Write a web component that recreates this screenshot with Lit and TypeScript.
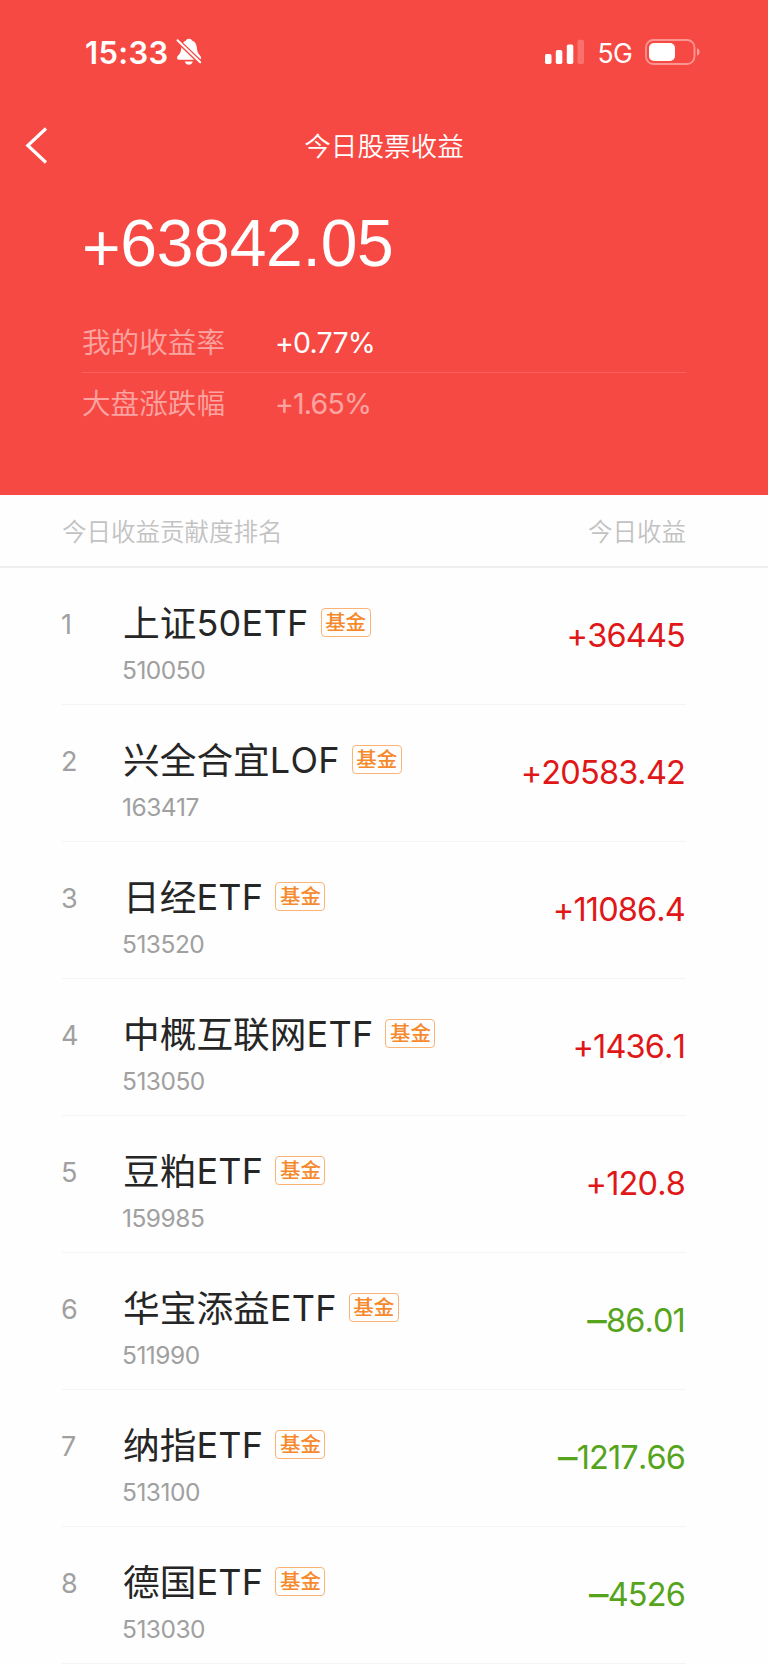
import { LitElement, html, css } from "lit";
import { customElement, property } from "lit/decorators.js";

interface Holding {
  name: string;
  suffix: string;
  code: string;
  amount: string;
}

const HOLDINGS: Holding[] = [
  { name: "上证", suffix: "50ETF", code: "510050", amount: "+36445" },
  { name: "兴全合宜", suffix: "LOF", code: "163417", amount: "+20583.42" },
  { name: "日经", suffix: "ETF", code: "513520", amount: "+11086.4" },
  { name: "中概互联网", suffix: "ETF", code: "513050", amount: "+1436.1" },
  { name: "豆粕", suffix: "ETF", code: "159985", amount: "+120.8" },
  { name: "华宝添益", suffix: "ETF", code: "511990", amount: "–86.01" },
  { name: "纳指", suffix: "ETF", code: "513100", amount: "–1217.66" },
  { name: "德国", suffix: "ETF", code: "513030", amount: "–4526" },
];

@customElement("status-bar")
class StatusBar extends LitElement {
  static styles = css`
    :host {
      display: flex;
      height: 104px;
      padding: 0 67px 0 85px;
      box-sizing: border-box;
      font-family: Inter, sans-serif;
      color: #fff;
    }
    .left, .right { display: flex; align-items: center; }
    .right { margin-left: auto; }
    .time { font-size: 31px; font-weight: 600; letter-spacing: 0.3px; line-height: 40px; margin-top: 1px; }
    .bell { margin-left: 7.500px; }
    .network { font-size: 26.500px; line-height: 40px; margin: 2px 0 0 13px; letter-spacing: -0.7px; }
    .battery { margin-left: 13px; }
    svg { display: block; }
  `;
  render() {
    return html`
      <div class="left">
        <span class="time">15:33</span>
        <svg class="bell" width="26" height="28" viewBox="0 0 26 28">
          <path fill="#fff" d="M13 .7c-1.600 0-2.700.8-3.200 2.100C8 3.500 6.700 4.700 6 6.500 5 9 5.600 12.500 4 15.200 2.900 17 1 18 1 20c0 1.100.7 1.700 1.800 1.700h20.400c1.100 0 1.900-.6 1.900-1.700 0-2-2.100-3.300-3-5C20.600 12 21.200 9 20.100 6.500c-.8-1.900-2.100-3.100-3.800-3.700C15.700 1.400 14.600.7 13 .7zM8.800 23.600h8c-.4 2-1.900 3.200-4 3.200s-3.600-1.200-4-3.200z"/>
          <path stroke="#f74943" stroke-width="4.600" d="M0 1l26 25"/>
          <path stroke="#fff" stroke-width="2" stroke-linecap="round" d="M1.500 2.200l22.700 22"/>
        </svg>
      </div>
      <div class="right">
        <svg width="40" height="26" viewBox="0 0 40 26">
          <g fill="#fff">
            <rect x="0" y="15" width="6.500" height="10" rx="1.700"/>
            <rect x="10.800" y="11" width="6.500" height="14" rx="1.700"/>
            <rect x="21.800" y="5.500" width="6.500" height="19.500" rx="1.700"/>
            <rect x="32.500" y="0.700" width="6.500" height="24.300" rx="1.700" opacity=".22"/>
          </g>
        </svg>
        <span class="network">5G</span>
        <svg class="battery" width="56" height="28" viewBox="0 0 56 28">
          <rect x="1" y="2" width="48.500" height="24" rx="7.500" fill="none" stroke="#fff" stroke-opacity=".42" stroke-width="1.800"/>
          <rect x="4" y="5" width="26" height="18" rx="5" fill="#fff"/>
          <path d="M52 10.300c1.700.6 2.600 2 2.600 3.700s-.9 3.100-2.600 3.700z" fill="#fff" opacity=".48"/>
        </svg>
      </div>
    `;
  }
}

@customElement("holding-row")
class HoldingRow extends LitElement {
  @property({ type: Number }) rank = 0;
  @property({ attribute: false }) item!: Holding;

  static styles = css`
    :host {
      display: grid;
      grid-template-columns: 61px 1fr auto;
      height: 137px;
      box-sizing: border-box;
      border-bottom: 1px solid #f4f4f4;
      font-family: Inter, sans-serif;
      font-kerning: none;
    }
    .rank { font-size: 27px; line-height: 34px; color: #a0a0a0; margin: 40px 0 0 -1px; font-weight: 400; }
    .main { padding-top: 33px; }
    .title { display: flex; align-items: center; height: 44px; color: #262626; }
    .name { font-family: "Noto Sans CJK SC", sans-serif; font-size: 36.700px; line-height: 44px; font-weight: 400; margin-top: -5px; }
    .suffix { font-size: 36px; line-height: 44px; font-weight: 400; letter-spacing: 0.3px; }
    .tag {
      font-family: "Noto Sans CJK SC", sans-serif;
      margin: -2px 0 0 12px;
      width: 50px; height: 29px; box-sizing: border-box;
      border: 1.500px solid #fbb475; border-radius: 4px;
      color: #f6892b; font-size: 20.500px; font-weight: 500; line-height: 25px; text-align: center;
    }
    .code { font-size: 24.500px; line-height: 30px; color: #a0a0a0; font-weight: 400; letter-spacing: -0.5px; margin: 10px 0 0 -1px; }
    .amount { font-size: 32.500px; line-height: 40px; margin: 48px 1px 0 0; letter-spacing: -0.85px; color: #e01718; font-weight: 400; }
    .loss { color: #55a41b; }
    .minus { font-size: 39px; line-height: 1px; vertical-align: -2px; }
  `;
  render() {
    const { name, suffix, code, amount } = this.item;
    const loss = amount.startsWith("–");
    return html`
      <span class="rank">${this.rank}</span>
      <div class="main">
        <div class="title">
          <span class="name">${name}</span><span class="suffix">${suffix}</span>
          <span class="tag">基金</span>
        </div>
        <div class="code">${code}</div>
      </div>
      ${loss
        ? html`<span class="amount loss"><span class="minus">–</span>${amount.slice(1)}</span>`
        : html`<span class="amount">${amount}</span>`}
    `;
  }
}

@customElement("app-root")
class AppRoot extends LitElement {
  static styles = css`
    :host {
      display: block;
      width: 768px;
      height: 1665px;
      overflow: hidden;
      background: #fefefe;
      font-family: "Noto Sans CJK SC", sans-serif;
    }
    .hero { height: 495px; background: #f74943; color: #fff; box-sizing: border-box; }
    .nav { display: grid; grid-template-columns: 60px 1fr 60px; align-items: center; height: 82px; }
    .back { display: block; margin-left: 25px; }
    .nav-title { text-align: center; font-size: 26.600px; line-height: 40px; font-weight: 350; margin-top: -1px; }
    .total { font-family: "Liberation Sans", sans-serif; font-size: 66px; line-height: 76px; margin: 19px 0 0 82px; letter-spacing: -0.25px; }
    .sign { vertical-align: -5px; line-height: 1px; }
    .stats { margin: 31px 82px 0; }
    .stat { display: grid; grid-template-columns: 193px 1fr; align-items: center; height: 61px; box-sizing: border-box; }
    .stat-label { font-size: 28.600px; line-height: 40px; opacity: .5; font-weight: 350; margin-top: -3px; }
    .stat-value { font-family: Inter, sans-serif; font-size: 28.500px; line-height: 40px; letter-spacing: -0.8px; font-weight: 400; margin-top: 1px; }
    .first { border-bottom: 1px solid rgba(255, 255, 255, .13); }
    .dim { opacity: .5; }
    .list-head {
      display: flex; justify-content: space-between; align-items: center;
      height: 73px; box-sizing: border-box; padding: 0 82px 0 62px;
      border-bottom: 2px solid #efefef; color: #c2c2c2;
      font-size: 24.500px; line-height: 36px; font-weight: 350;
    }
    .list { padding: 0 82px 0 62px; }
  `;
  render() {
    return html`
      <header class="hero">
        <status-bar></status-bar>
        <div class="nav">
          <svg class="back" width="24" height="38" viewBox="0 0 24 38">
            <path d="M21 2.500L2.800 19.500 21 36.500" fill="none" stroke="#fff" stroke-width="3.200"/>
          </svg>
          <span class="nav-title">今日股票收益</span>
        </div>
        <div class="total"><span class="sign">+</span>63842.05</div>
        <div class="stats">
          <div class="stat first">
            <span class="stat-label">我的收益率</span><span class="stat-value">+0.77%</span>
          </div>
          <div class="stat">
            <span class="stat-label">大盘涨跌幅</span><span class="stat-value dim">+1.65%</span>
          </div>
        </div>
      </header>
      <div class="list-head"><span>今日收益贡献度排名</span><span>今日收益</span></div>
      <div class="list">
        ${HOLDINGS.map((item, i) => html`<holding-row .rank=${i + 1} .item=${item}></holding-row>`)}
      </div>
    `;
  }
}
